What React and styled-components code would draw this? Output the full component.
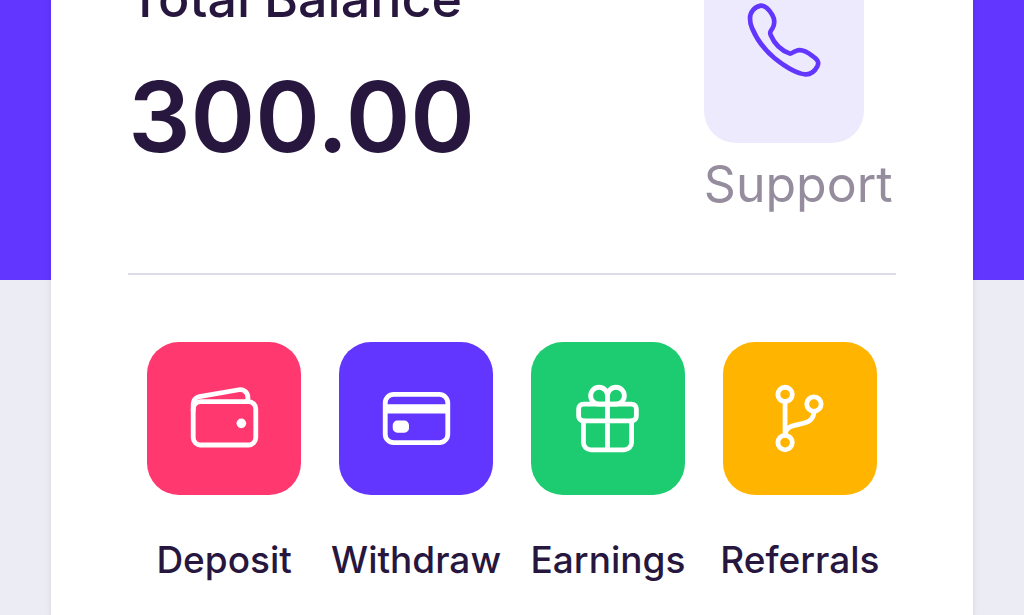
import React from 'react';
import styled, { createGlobalStyle } from 'styled-components';
import {
  IoWalletOutline,
  IoCardOutline,
  IoGiftOutline,
  IoGitBranchOutline,
} from 'react-icons/io5';

/* ─── Global ─────────────────────────────────────────────────── */

const GlobalStyle = createGlobalStyle`
  * { box-sizing: border-box; }

  body {
    margin: 0;
    font-family: Inter, 'Open Sans', sans-serif;
    color: #27173e;
    background: #edeef5;
  }
`;

/* ─── Page ───────────────────────────────────────────────────── */

const Page = styled.main`
  display: flex;
  flex-direction: column;
  min-height: 100vh;
  padding: 0 5%;
  overflow: hidden;
  background: linear-gradient(to bottom, #6236ff 280px, #ecedf4 280px);
`;

const WalletCard = styled.section`
  flex: 1;
  margin-top: -63px;
  padding: 0 77px 24px;
  background: #ffffff;
  box-shadow: 0 3px 6px rgba(0, 0, 0, 0.1);
`;

/* ─── Balance ────────────────────────────────────────────────── */

const BalanceRow = styled.div`
  display: flex;
  justify-content: space-between;
  align-items: flex-start;
  height: 338px;
  border-bottom: 2px solid #dcdce9;
`;

const BalanceInfo = styled.div`
  padding-top: 32px;
`;

const BalanceTitle = styled.div`
  font-size: 52px;
  font-weight: 500;
  line-height: 60px;
`;

const BalanceAmount = styled.h1`
  margin: 38px 0 0;
  font-size: 98px;
  font-weight: 600;
  line-height: 100px;
`;

const SupportLink = styled.a`
  display: block;
  width: 192px;
  color: #958d9e;
  font-size: 50px;
  line-height: 60px;
  text-decoration: none;
`;

const SupportIcon = styled.span`
  display: flex;
  align-items: center;
  justify-content: center;
  width: 160px;
  height: 206px;
  margin-bottom: 11px;
  border-radius: 32px;
  background: #eeeafe;
  color: #6236ff;
  font-size: 80px;
`;

/* ─── Actions ────────────────────────────────────────────────── */

const Actions = styled.nav`
  display: grid;
  grid-template-columns: repeat(4, minmax(0, 1fr));
  padding-top: 67px;
`;

const ActionLink = styled.a`
  display: flex;
  flex-direction: column;
  align-items: center;
  gap: 40px;
  color: inherit;
  font-size: 37px;
  font-weight: 500;
  line-height: 50px;
  text-decoration: none;
  white-space: nowrap;
`;

const ActionIcon = styled.span`
  display: flex;
  align-items: center;
  justify-content: center;
  width: 154px;
  height: 153px;
  border-radius: 32px;
  background: ${props => props.$bg};
  color: #ffffff;
  font-size: 77px;
`;

const actions = [
  { label: 'Deposit', bg: '#ff396f', Icon: IoWalletOutline },
  { label: 'Withdraw', bg: '#6236ff', Icon: IoCardOutline },
  { label: 'Earnings', bg: '#1dcc70', Icon: IoGiftOutline },
  { label: 'Referrals', bg: '#ffb400', Icon: IoGitBranchOutline },
];

function HandsetIcon() {
  return (
    <svg
      width="1em"
      height="1em"
      viewBox="0 0 240 240"
      fill="none"
      stroke="currentColor"
      strokeWidth="14"
      strokeLinejoin="round"
      aria-hidden="true"
    >
      <path d="M18 55C18 36 32 20 50 17C64 16 76 30 85 45C93 59 93 72 85 86C79 94 77 97 80 105C91 131 113 152 138 161C144 161 149 154 158 152C172 147 190 156 204 167C219 178 227 185 220 199C212 214 201 224 184 223C158 221 118 196 91 174C59 147 38 118 24 84C20 75 18 66 18 55Z" />
    </svg>
  );
}

/* ─── Component ──────────────────────────────────────────────── */

export default function App() {
  return (
    <>
      <GlobalStyle />
      <Page>
        <WalletCard>
          <BalanceRow>
            <BalanceInfo>
              <BalanceTitle>Total Balance</BalanceTitle>
              <BalanceAmount>300.00</BalanceAmount>
            </BalanceInfo>
            <SupportLink href="#support">
              <SupportIcon><HandsetIcon /></SupportIcon>
              Support
            </SupportLink>
          </BalanceRow>

          <Actions>
            {actions.map(({ label, bg, Icon }) => (
              <ActionLink key={label} href={`#${label.toLowerCase()}`}>
                <ActionIcon $bg={bg}><Icon /></ActionIcon>
                {label}
              </ActionLink>
            ))}
          </Actions>
        </WalletCard>
      </Page>
    </>
  );
}
